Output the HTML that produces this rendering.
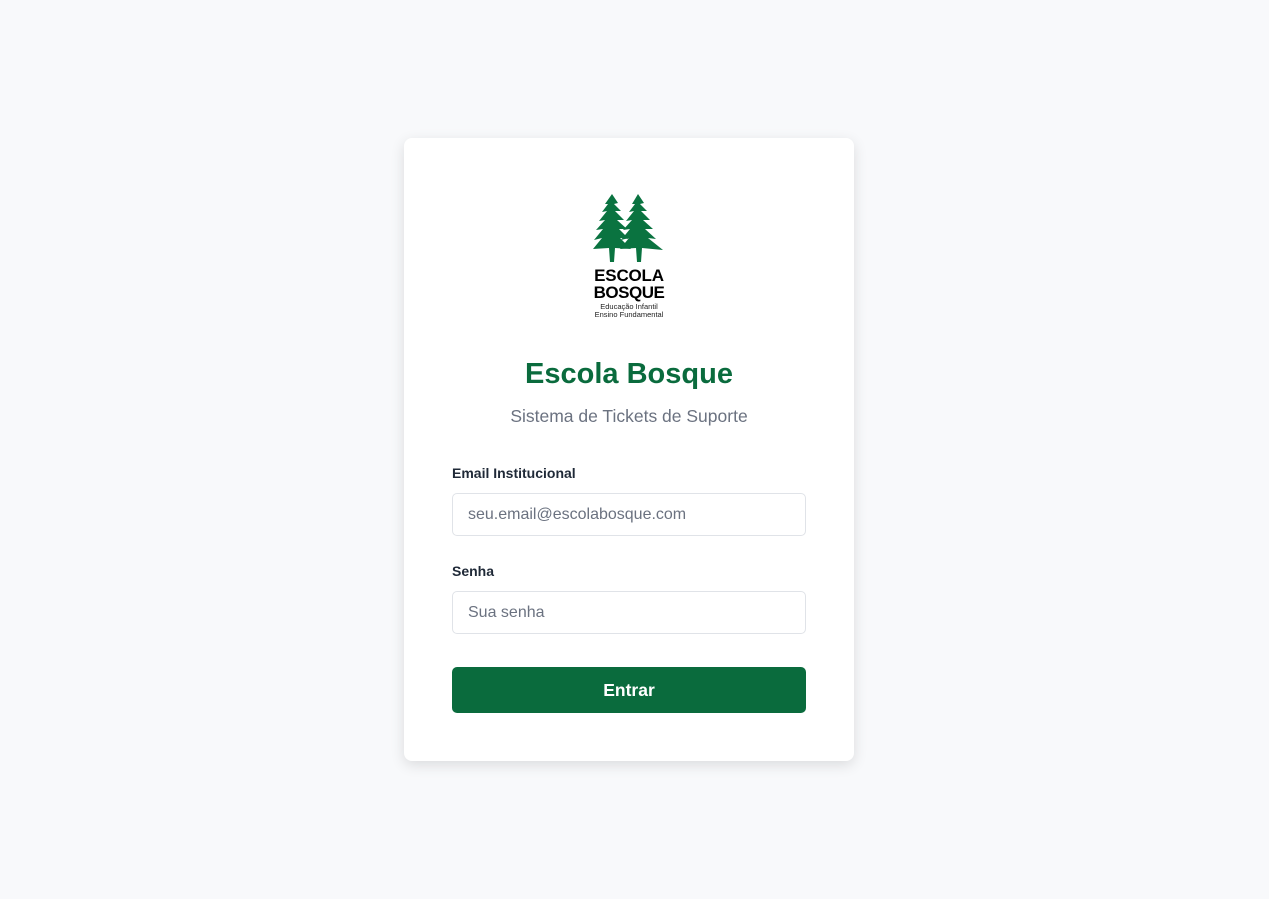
<!DOCTYPE html>
<html><head><meta charset="utf-8"><style>
html,body{margin:0;padding:0;background:#f8f9fb;font-family:"Liberation Sans",sans-serif;}
.card{position:absolute;left:404px;top:138px;width:450px;height:623px;background:#fff;border-radius:8px;box-shadow:0 4px 14px rgba(0,0,0,0.12);}
.logo{position:absolute;left:189px;top:56px;width:72px;text-align:center;}
h1{position:absolute;left:0;width:450px;top:220px;margin:0;text-align:center;color:#0a6b3d;font-size:29px;font-weight:bold;}
.sub{position:absolute;left:0;width:450px;top:268px;text-align:center;color:#6b7280;font-size:17.5px;}
label{position:absolute;left:48px;font-size:14px;font-weight:bold;color:#1f2937;}
.in{position:absolute;left:48px;width:354px;height:43px;border:1px solid #e0e3e8;border-radius:5px;box-sizing:border-box;padding-left:15px;line-height:42px;color:#6b7280;font-size:16px;}
.btn{position:absolute;left:48px;top:529px;width:354px;height:46px;background:#0a6b3d;border-radius:5px;color:#fff;font-weight:bold;font-size:17.5px;text-align:center;line-height:46px;}
</style></head><body>
<div class="card">
<div class="logo">
<svg width="72" height="68" viewBox="0 0 72 68">
<g fill="#0a7340">
<path d="M19 0 L25 9 L21 10 L28 17 L22 17 L31 26 L24 26 L34 35 L26 35 L36 45 L27 44 L38 55 L22 54 L21 68 L17 68 L16 54 L0 55 L9 44 L1 46 L10 35 L3 36 L12 26 L6 27 L14 17 L9 18 L15 10 L12 10 Z"/>
<path d="M45 0 L51 9 L47 10 L54 17 L48 17 L57 26 L50 26 L60 35 L52 35 L63 45 L55 44 L70 56 L49 54 L48 68 L44 68 L43 54 L27 55 L36 44 L28 46 L37 35 L30 36 L39 26 L33 27 L41 17 L36 18 L42 10 L39 10 Z"/>
</g></svg>
<div style="font-weight:bold;font-size:17px;line-height:17px;letter-spacing:-0.2px;color:#000;margin-top:0">ESCOLA</div>
<div style="font-weight:bold;font-size:17px;line-height:17px;letter-spacing:-0.5px;color:#000">BOSQUE</div>
<div style="font-size:7.5px;line-height:8px;color:#222;margin-top:2px;white-space:nowrap">Educação Infantil<br>Ensino Fundamental</div>
</div>
<h1>Escola Bosque</h1>
<div class="sub">Sistema de Tickets de Suporte</div>
<label style="top:327px">Email Institucional</label>
<div class="in" style="top:355px">seu.email@escolabosque.com</div>
<label style="top:425px">Senha</label>
<div class="in" style="top:453px">Sua senha</div>
<div class="btn">Entrar</div>
</div>
</body></html>
